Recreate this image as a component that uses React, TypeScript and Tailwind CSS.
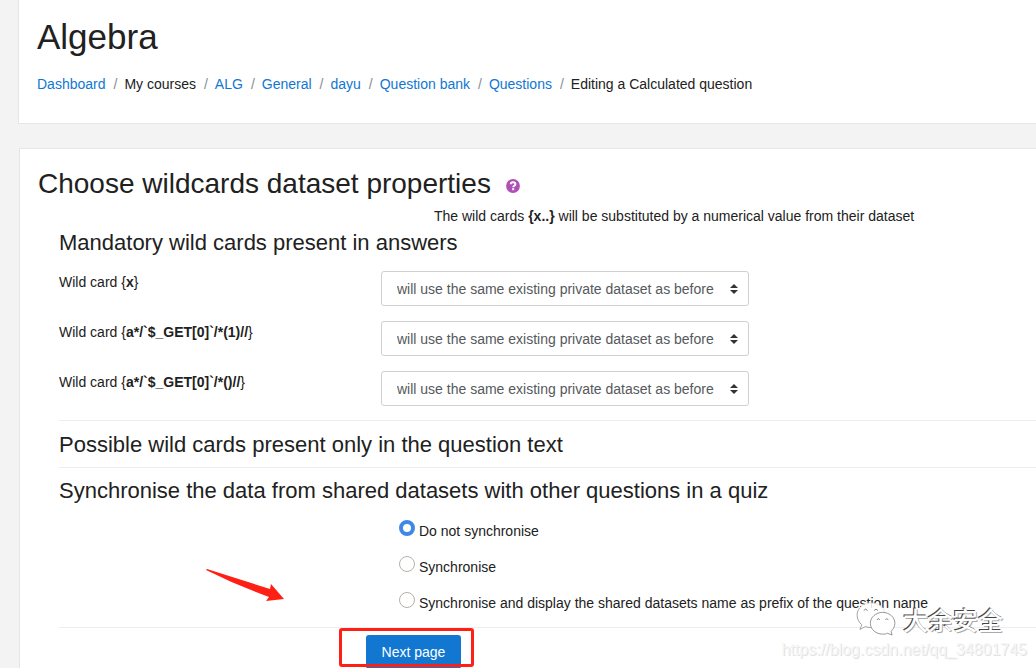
import React from "react";

const crumbs = [
  { label: "Dashboard", link: true },
  { label: "My courses", link: false },
  { label: "ALG", link: true },
  { label: "General", link: true },
  { label: "dayu", link: true },
  { label: "Question bank", link: true },
  { label: "Questions", link: true },
  { label: "Editing a Calculated question", link: false },
];

const wildcards = ["x", "a*/`$_GET[0]`/*(1)//", "a*/`$_GET[0]`/*()//"];

const syncOptions = [
  "Do not synchronise",
  "Synchronise",
  "Synchronise and display the shared datasets name as prefix of the question name",
];

function Header() {
  return (
    <header className="border-b border-l border-[#e6e6e6] bg-white px-[18px] pt-4 pb-7">
      <h1 className="text-[35px] leading-[42px]">Algebra</h1>
      <nav aria-label="Breadcrumb" className="mt-[15px]">
        <ol className="flex flex-wrap">
          {crumbs.map((c, i) => (
            <li key={c.label} className="flex">
              {i > 0 && <span className="pr-[7px] pl-2 text-[#868e96]">/</span>}
              {c.link ? (
                <a href="#" className="text-[#1177d1]">{c.label}</a>
              ) : (
                <span>{c.label}</span>
              )}
            </li>
          ))}
        </ol>
      </nav>
    </header>
  );
}

function HelpIcon() {
  return (
    <button type="button" aria-label="Help" className="mt-1 ml-[15px]">
      <svg viewBox="0 0 14 14" className="size-3.5">
        <circle cx="7" cy="7" r="6.9" fill="#b04fb5" />
        <path d="M4.7 5.3C4.8 3.9 5.8 3.3 7 3.3c1.3 0 2.4.7 2.4 1.900 0 1.500-2.200 1.500-2.200 3" fill="none" stroke="#fff" strokeWidth="1.9" />
        <rect x="6.2" y="9.200" width="2" height="2" fill="#fff" />
      </svg>
    </button>
  );
}

function WildcardRow({ name, id }: { name: string; id: string }) {
  return (
    <div className="flex items-start">
      <label htmlFor={id} className="w-[322px] shrink-0">
        Wild card {"{"}
        <b>{name}</b>
        {"}"}
      </label>
      <div className="relative">
        <select
          id={id}
          className="block h-[35px] w-[368px] appearance-none rounded-[3px] border border-[#d0d0d0] bg-white pl-[15px] text-[#55595c]"
        >
          <option>will use the same existing private dataset as before</option>
        </select>
        <svg viewBox="0 0 8 10" className="pointer-events-none absolute top-[13px] right-[11px] h-2.5 w-2">
          <path d="M0 4 4 0l4 4zM0 6h8L4 10z" fill="#333" />
        </svg>
      </div>
    </div>
  );
}

function Watermark() {
  return (
    <div className="pointer-events-none absolute right-[9px] bottom-2 flex flex-col items-end">
      <div className="mr-6 flex items-center gap-[7px]">
        <svg viewBox="0 0 42 36" className="h-[34px] w-10" fill="#fff" stroke="#777" strokeWidth="0.8">
          <path d="M16 1C7 1 1 7 1 14c0 4 2 8 5 10l-2 5 6-3c2 1 5 1 7 1" stroke="none" />
          <path d="M16 1c7 0 13 4 14 10L17 27z" stroke="none" />
          <path d="M4 6C2 8 1 11 1 14c0 4 2 8 5 10l-2 5 6-3c2 1 5 1 7 1" fill="none" stroke="#888" />
          <path d="M4 6C7 2 11 1 16 1c7 0 13 4 14 10" fill="none" stroke="#ddd" />
          <path d="M28 11c-7 0-13 5-13 11.500S21 34 28 34c2 0 4 0 5-1l5 2-1-4c2-2 4-5 4-8.500C41 16 35 11 28 11z" />
          <path d="M8 9q2-3 4 0M19 9q2-3 4 0M22 19q1.500-3 3 0M31 19q1.500-3 3 0" fill="none" stroke="#555" />
        </svg>
        <span className="font-['Noto_Sans_CJK_SC',sans-serif] text-[25px] leading-8 font-medium text-white [text-shadow:-1px_-1px_0_#444,1px_1px_0_#aaa]">
          大余安全
        </span>
      </div>
      <span className="mt-1 text-[16px] leading-5 text-[#f6f6f6] [text-shadow:1px_1px_0_#e2e2e2]">
        https://blog.csdn.net/qq_34801745
      </span>
    </div>
  );
}

export default function App() {
  return (
    <div className="relative h-screen overflow-hidden bg-[#f3f3f3] pl-[18px] font-['Liberation_Sans',Arial,sans-serif] text-[14px] leading-[22px] text-[#212121]">
      <Header />
      <main className="mt-6 ml-px border-t border-l border-[#e6e6e6] bg-white pt-[18px] pl-[18px]">
        <div className="flex items-center">
          <h2 className="text-[28px] leading-[34px]">Choose wildcards dataset properties</h2>
          <HelpIcon />
        </div>
        <p className="mt-1 pr-9 pl-[396px]">
          The wild cards <b>{"{x..}"}</b> will be substituted by a numerical value from their dataset
        </p>
        <form className="pl-[21px]" onSubmit={(e) => e.preventDefault()}>
          <section className="border-b border-[#eee] pb-3.5">
            <h3 className="mt-[3px] text-[22px] leading-[26px]">Mandatory wild cards present in answers</h3>
            <div className="mt-[15px] flex flex-col gap-[15px]">
              {wildcards.map((w, i) => (
                <WildcardRow key={w} name={w} id={`wildcard-${i}`} />
              ))}
            </div>
          </section>
          <section className="border-b border-[#eee] pt-[11px] pb-[9px]">
            <h3 className="text-[22px] leading-[26px]">Possible wild cards present only in the question text</h3>
          </section>
          <fieldset className="border-b border-[#eee] pb-[13px]">
            <legend className="pt-2.5 text-[22px] leading-[26px]">
              Synchronise the data from shared datasets with other questions in a quiz
            </legend>
            <div className="mt-4 flex flex-col gap-3.5 pl-[340px]">
              {syncOptions.map((o, i) => (
                <label key={o} className="flex items-start gap-1">
                  <input
                    type="radio"
                    name="sync"
                    defaultChecked={i === 0}
                    className="size-4 shrink-0 appearance-none rounded-full border border-[#b6b0aa] bg-white checked:border-4 checked:border-[#3f88e6]"
                  />
                  <span>{o}</span>
                </label>
              ))}
            </div>
          </fieldset>
          <div className="relative mt-[7px] ml-[307px] w-[95px]">
            <button type="submit" className="h-[34px] w-full rounded-[3px] bg-[#1177d1] text-white">
              Next page
            </button>
            <div className="pointer-events-none absolute -top-[7px] -right-[13px] -left-[27px] h-[39px] rounded-[3px] border-3 border-[#ff2015]" />
            <svg viewBox="0 0 78 34" className="pointer-events-none absolute -top-[66px] -left-[160px] h-[34px] w-[78px]">
              <path d="M0 1 1 0 64 20 65 15 78 30 60 32 63 28Q30 16 0 1Z" fill="#ff2015" />
            </svg>
          </div>
        </form>
      </main>
      <Watermark />
    </div>
  );
}
